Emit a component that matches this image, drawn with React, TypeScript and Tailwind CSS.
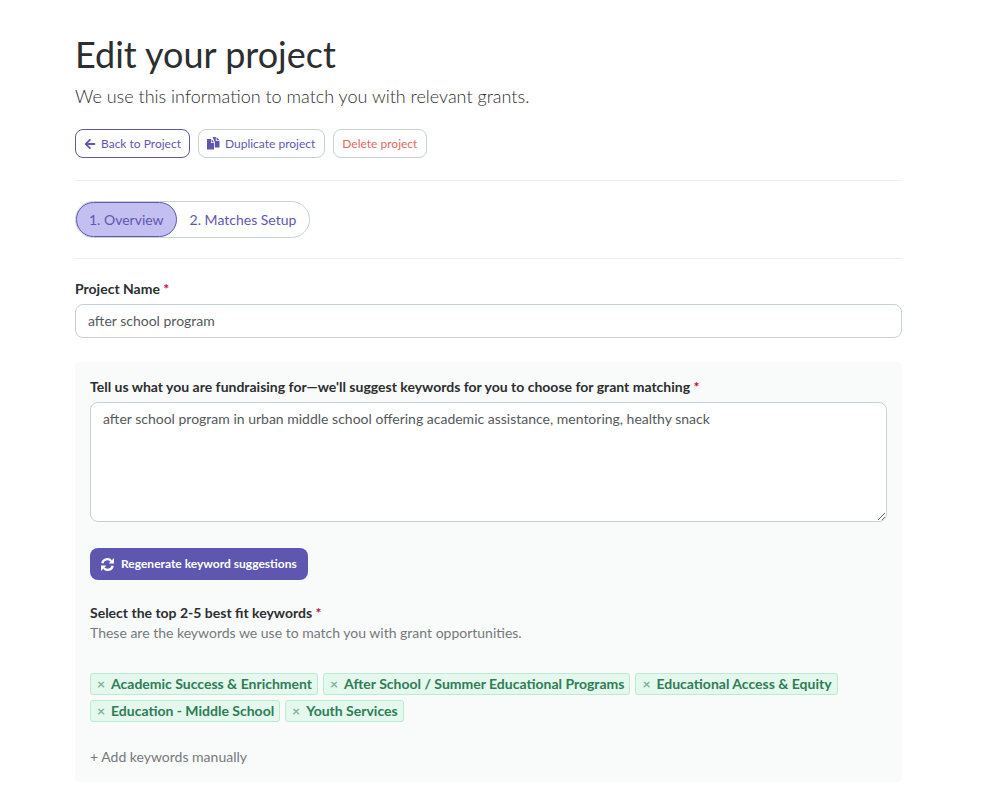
import React from "react";
import { FaArrowLeft } from "react-icons/fa";

const keywords = [
  "Academic Success & Enrichment",
  "After School / Summer Educational Programs",
  "Educational Access & Equity",
  "Education - Middle School",
  "Youth Services",
];

function Required() {
  return <span className="text-[#b5123e]">*</span>;
}

function DuplicateIcon() {
  return (
    <svg viewBox="0 0 13 13" className="size-[13px]" fill="currentColor" aria-hidden="true">
      <path d="M0 2h4v4h3v6.5H0z" />
      <path d="M4.7 2L7 5.2H4.7z" />
      <path d="M5.6 0h3.2v4h3.7v6.5H7.8V5z" />
      <path d="M9.6 0l2.9 3.2H9.6z" />
    </svg>
  );
}

function RefreshIcon() {
  return (
    <svg viewBox="0 0 13 13" className="size-[13px]" fill="none" stroke="currentColor" strokeWidth="2.3" aria-hidden="true">
      <path d="M1.3 5.3A5.1 5.1 0 0 1 10.2 3M11.7 7.7A5.1 5.1 0 0 1 2.8 10" />
      <path d="M13 0v5.4H7.6zM0 13V7.6h5.4z" fill="currentColor" stroke="none" />
    </svg>
  );
}

export default function App() {
  return (
    <main className="min-h-screen bg-white pl-[75px] pr-[90px] pt-[30px] font-['Lato',sans-serif] text-sm leading-5 text-[#2c2e30]">
      <h1 className="text-4xl leading-12">Edit your project</h1>
      <p className="mt-1 text-lg font-light leading-7">We use this information to match you with relevant grants.</p>

      <div className="mt-[19px] flex items-center gap-2 text-xs">
        <a href="#project" className="flex h-[29px] items-center gap-[5px] rounded-lg border border-[#5f57af] px-2 text-[#5f57af]">
          <FaArrowLeft className="size-3" />
          Back to Project
        </a>
        <button type="button" className="flex h-[29px] items-center gap-[5px] rounded-lg border border-[#c5d1d3] pl-2 pr-[9px] text-[#5f57af]">
          <DuplicateIcon />
          Duplicate project
        </button>
        <button type="button" className="h-[29px] rounded-lg border border-[#c5d1d3] pl-2 pr-[9px] text-[#e46660]">
          Delete project
        </button>
      </div>

      <nav className="mt-[22px] border-y border-[#eceeef] py-5">
        <div className="flex h-[37px] w-fit items-stretch rounded-full border border-[#c8d3d4] text-[#5f57af]">
          <a href="#overview" className="flex items-center rounded-full border border-[#5f57af] bg-[#c3bff0] px-3">1. Overview</a>
          <a href="#matches" className="flex items-center px-[13px]">2. Matches Setup</a>
        </div>
      </nav>

      <form>
        <label htmlFor="name" className="mt-5 block font-bold">Project Name <Required /></label>
        <input id="name" defaultValue="after school program" className="mt-[5px] h-[34px] w-full rounded-lg border border-[#c5d1d3] px-3 pb-[2px] text-[#55595c]" />

        <section className="mt-6 rounded bg-[#f9fafa] p-[15px]">
          <label htmlFor="purpose" className="block font-bold">
            Tell us what you are fundraising for—we'll suggest keywords for you to choose for grant matching <Required />
          </label>
          <textarea id="purpose" defaultValue="after school program in urban middle school offering academic assistance, mentoring, healthy snack" className="mt-[5px] block h-[120px] w-full rounded-lg border border-[#c5d1d3] bg-white px-3 py-[6px] text-[#55595c]" />
          <button type="button" className="mt-[26px] flex h-8 items-center gap-[7px] rounded-lg bg-[#5f57af] px-[11px] text-xs font-bold text-white">
            <RefreshIcon />
            Regenerate keyword suggestions
          </button>
          <h2 className="mt-[23px] font-bold">Select the top 2-5 best fit keywords <Required /></h2>
          <p className="text-[#76797c]">These are the keywords we use to match you with grant opportunities.</p>
          <ul className="mt-[30px] flex flex-wrap gap-[5px] font-bold text-[#2f7d57]">
            {keywords.map((keyword) => (
              <li key={keyword} className="flex h-[22px] items-center rounded-[3px] border border-[#b9ecd3] bg-[#e4f8ed] px-[5px]">
                <button type="button" aria-label={`Remove ${keyword}`} className="mr-[5px] w-[10px] text-[#7fb39a]">×</button>
                {keyword}
              </li>
            ))}
          </ul>
          <button type="button" className="mt-[25px] block text-[#76797c]">+ Add keywords manually</button>
        </section>
      </form>
    </main>
  );
}
